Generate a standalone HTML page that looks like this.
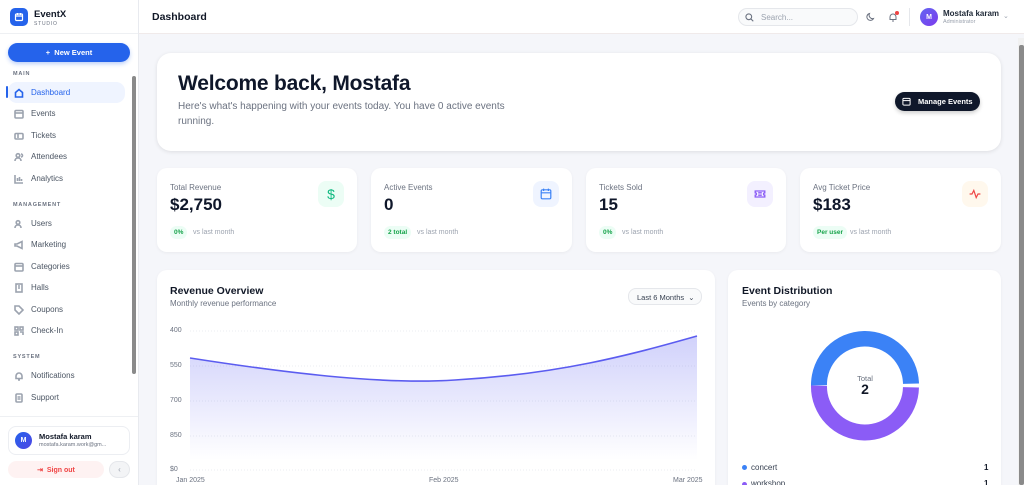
<!DOCTYPE html>
<html style="overflow:hidden;width:1024px;height:485px"><head><meta charset="utf-8"><style>
*{box-sizing:border-box;margin:0;padding:0}
body{width:1024px;height:485px;overflow:hidden;font-family:"Liberation Sans",sans-serif;background:#f5f6fa;position:relative;color:#111827}
.abs{position:absolute}
.sb{left:0;top:0;width:139px;height:485px;background:#fff;border-right:1px solid #e8eaef}
.nav{position:absolute;left:8px;width:117px;height:21px;display:flex;align-items:center;font-size:8px;color:#4b5563;padding-left:6px}
.nav svg{width:10px;height:10px;margin-right:7px;stroke:#9ca3af;fill:none;stroke-width:1.6}
.sec{position:absolute;left:13px;font-size:5.5px;letter-spacing:.8px;color:#6b7280;font-weight:bold}
.card{position:absolute;background:#fff;border-radius:10px;box-shadow:0 1px 3px rgba(0,0,0,.05)}
.lbl{font-size:8px;color:#6b7280;position:absolute;left:13px;top:15px}
.val{font-size:17px;font-weight:bold;position:absolute;left:13px;top:27px;color:#0f172a}
.pill{position:absolute;left:13px;top:58px;font-size:6.5px;font-weight:bold;color:#16a34a;background:#ecfdf5;border-radius:7px;padding:3px 4px}
.vs{position:absolute;top:61px;font-size:7px;color:#9ca3af}
.ic{position:absolute;right:13px;top:13px;width:26px;height:26px;border-radius:8px;display:flex;align-items:center;justify-content:center}
.yl{position:absolute;left:170px;font-size:7px;color:#6b7280}
</style></head><body>
<div class="abs sb">
 <div class="abs" style="left:10px;top:8px;width:18px;height:18px;border-radius:5px;background:#2563eb;display:flex;align-items:center;justify-content:center"><svg width="10" height="10" viewBox="0 0 10 10" fill="none" stroke="#fff" stroke-width="1.2"><rect x="1.5" y="2" width="7" height="6.5" rx="1"/><path d="M1.5 4h7M3.5 1v2M6.5 1v2"/></svg></div>
 <div class="abs" style="left:34px;top:9px;font-size:9.5px;font-weight:bold">EventX</div>
 <div class="abs" style="left:34px;top:21px;font-size:5px;letter-spacing:.8px;color:#6b7280">STUDIO</div>
 <div class="abs" style="left:0;top:33px;width:138px;border-top:1px solid #eef0f3"></div>
 <div class="abs" style="left:8px;top:43px;width:122px;height:19px;border-radius:10px;background:#2563eb;color:#fff;font-size:7.5px;font-weight:bold;display:flex;align-items:center;justify-content:center;box-shadow:0 2px 4px rgba(37,99,235,.3)">+&nbsp;&nbsp;New Event</div>
 <div class="sec" style="top:71px">MAIN</div>
 <div class="nav" style="top:82px;background:#eff4ff;border-radius:9px;color:#2563eb"><svg viewBox="0 0 10 10" style="stroke:#2563eb"><path d="M1.5 4.5L5 1.5l3.5 3V9h-7z"/></svg>Dashboard</div>
 <div class="abs" style="left:6px;top:86px;width:2px;height:12px;background:#2563eb;border-radius:1px"></div>
 <div class="nav" style="top:103px"><svg viewBox="0 0 10 10"><rect x="1" y="1.5" width="8" height="7.5" rx="1"/><path d="M1 4h8"/></svg>Events</div>
 <div class="nav" style="top:125px"><svg viewBox="0 0 10 10"><rect x="1" y="2.5" width="8" height="5.5" rx="1"/><path d="M4 3v4"/></svg>Tickets</div>
 <div class="nav" style="top:146px"><svg viewBox="0 0 10 10"><circle cx="4" cy="3.5" r="1.8"/><path d="M1 9c0-2 1.5-3 3-3s3 1 3 3M7 2a1.5 1.5 0 010 3"/></svg>Attendees</div>
 <div class="nav" style="top:168px"><svg viewBox="0 0 10 10"><path d="M1 1v8h8M3.5 7V4M5.5 7V3M7.5 7V5"/></svg>Analytics</div>
 <div class="sec" style="top:202px">MANAGEMENT</div>
 <div class="nav" style="top:213px"><svg viewBox="0 0 10 10"><circle cx="4" cy="3.5" r="1.8"/><path d="M1 9c0-2 1.5-3 3-3s3 1 3 3"/></svg>Users</div>
 <div class="nav" style="top:234px"><svg viewBox="0 0 10 10"><path d="M1 4h2l5-2.5v7L3 6H1z"/></svg>Marketing</div>
 <div class="nav" style="top:256px"><svg viewBox="0 0 10 10"><rect x="1" y="1.5" width="8" height="7.5" rx="1"/><path d="M1 4h8"/></svg>Categories</div>
 <div class="nav" style="top:277px"><svg viewBox="0 0 10 10"><rect x="2" y="1" width="6" height="8"/><path d="M4 3h2M4 5h2"/></svg>Halls</div>
 <div class="nav" style="top:299px"><svg viewBox="0 0 10 10"><path d="M1 1h4l4 4-4 4-4-4z"/></svg>Coupons</div>
 <div class="nav" style="top:320px"><svg viewBox="0 0 10 10"><rect x="1" y="1" width="3" height="3"/><rect x="6" y="1" width="3" height="3"/><rect x="1" y="6" width="3" height="3"/><path d="M6 6h3v3"/></svg>Check-In</div>
 <div class="sec" style="top:354px">SYSTEM</div>
 <div class="nav" style="top:365px"><svg viewBox="0 0 10 10"><path d="M2 7.5V5a3 3 0 016 0v2.5zM4 9h2"/></svg>Notifications</div>
 <div class="nav" style="top:387px"><svg viewBox="0 0 10 10"><rect x="2" y="1" width="6" height="8" rx="1"/><path d="M3.5 4h3M3.5 6h3"/></svg>Support</div>
 <div class="abs" style="left:132px;top:76px;width:4px;height:298px;background:#8a8a8a;border-radius:2px"></div>
 <div class="abs" style="left:0;top:416px;width:138px;height:69px;background:#fff;border-top:1px solid #eef0f3"></div>
 <div class="abs" style="left:8px;top:426px;width:122px;height:29px;border:1px solid #eceef2;border-radius:8px;background:#fff"></div>
 <div class="abs" style="left:15px;top:432px;width:17px;height:17px;border-radius:50%;background:linear-gradient(135deg,#2563eb,#4f46e5);color:#fff;font-size:7px;font-weight:bold;display:flex;align-items:center;justify-content:center">M</div>
 <div class="abs" style="left:39px;top:432px;font-size:7.5px;font-weight:bold">Mostafa karam</div>
 <div class="abs" style="left:39px;top:442px;font-size:5.5px;color:#6b7280">mostafa.karam.work@gm...</div>
 <div class="abs" style="left:8px;top:461px;width:96px;height:17px;border-radius:9px;background:#fef2f2;color:#ef4444;font-size:7px;font-weight:bold;display:flex;align-items:center;justify-content:center">⇥&nbsp; Sign out</div>
 <div class="abs" style="left:109px;top:461px;width:21px;height:17px;border-radius:9px;background:#f3f4f6;border:1px solid #e5e7eb;color:#9ca3af;font-size:8px;display:flex;align-items:center;justify-content:center">‹</div>
</div>
<div class="abs" style="left:139px;top:0;width:885px;height:34px;background:#fff;border-bottom:1px solid #f0eaea"></div>
<div class="abs" style="left:152px;top:11px;font-size:10.5px;font-weight:bold">Dashboard</div>
<div class="abs" style="left:738px;top:8px;width:120px;height:18px;border:1px solid #e5e7eb;border-radius:9px;background:#f9fafb;font-size:8px;color:#9ca3af;padding:4px 0 0 22px">Search...</div>
<svg class="abs" style="left:745px;top:13px" width="9" height="9" viewBox="0 0 10 10" fill="none" stroke="#6b7280" stroke-width="1.2"><circle cx="4.2" cy="4.2" r="3.2"/><path d="M6.6 6.6l2.6 2.6"/></svg>
<svg class="abs" style="left:866px;top:12px" width="10" height="10" viewBox="0 0 10 10" fill="none" stroke="#6b7280" stroke-width="1"><path d="M7.5 6.5A3.5 3.5 0 013.5 1.5a3.5 3.5 0 104 5z"/></svg>
<svg class="abs" style="left:888px;top:12px" width="10" height="10" viewBox="0 0 10 10" fill="none" stroke="#6b7280" stroke-width="1"><path d="M2 7.5V5a3 3 0 016 0v2.5zM4 9h2"/></svg>
<div class="abs" style="left:895px;top:11px;width:4px;height:4px;border-radius:50%;background:#ef4444"></div>
<div class="abs" style="left:909px;top:8px;width:1px;height:18px;background:#e5e7eb"></div>
<div class="abs" style="left:920px;top:8px;width:18px;height:18px;border-radius:50%;background:linear-gradient(135deg,#6366f1,#7c3aed);color:#fff;font-size:7px;font-weight:bold;display:flex;align-items:center;justify-content:center">M</div>
<div class="abs" style="left:943px;top:9px;font-size:8px;font-weight:bold;color:#1f2937">Mostafa karam</div>
<div class="abs" style="left:943px;top:19px;font-size:5.5px;color:#9ca3af">Administrator</div>
<div class="abs" style="left:1003px;top:12px;font-size:7px;color:#9ca3af">⌄</div>
<div class="abs" style="left:1018px;top:38px;width:6px;height:447px;background:#f1f1f1"></div>
<div class="abs" style="left:1019px;top:45px;width:5px;height:440px;background:#8a8a8a;border-radius:2px"></div>
<div class="card" style="left:157px;top:53px;width:844px;height:98px;border-radius:14px;box-shadow:0 1px 4px rgba(0,0,0,.1)"></div>
<div class="abs" style="left:178px;top:72px;font-size:21px;font-weight:bold;color:#0f172a;letter-spacing:-.2px">Welcome back, Mostafa</div>
<div class="abs" style="left:178px;top:99px;width:345px;font-size:10px;line-height:15px;color:#6b7280">Here's what's happening with your events today. You have 0 active events running.</div>
<div class="abs" style="left:895px;top:92px;width:85px;height:19px;border-radius:10px;background:#0f172a;color:#fff;font-size:7.5px;font-weight:bold;display:flex;align-items:center;padding-left:23px;box-shadow:0 2px 4px rgba(0,0,0,.2)">Manage Events</div>
<svg class="abs" style="left:902px;top:97px" width="9" height="9" viewBox="0 0 10 10" fill="none" stroke="#fff" stroke-width="1.1"><rect x="1" y="1.5" width="8" height="7.5" rx="1"/><path d="M1 4h8"/></svg>
<div class="card" style="left:157px;top:168px;width:200px;height:84px"><div class="lbl">Total Revenue</div><div class="val">$2,750</div><div class="pill">0%</div><div class="vs" style="left:36px">vs last month</div><div class="ic" style="background:#ecfdf5;color:#10b981;font-size:14px">$</div></div>
<div class="card" style="left:371px;top:168px;width:201px;height:84px"><div class="lbl">Active Events</div><div class="val">0</div><div class="pill">2 total</div><div class="vs" style="left:46px">vs last month</div><div class="ic" style="background:#eff4ff"><svg width="12" height="12" viewBox="0 0 10 10" fill="none" stroke="#3b82f6" stroke-width="1"><rect x="1" y="1.5" width="8" height="7.5" rx="1"/><path d="M1 4h8M3 .5v2M7 .5v2"/></svg></div></div>
<div class="card" style="left:586px;top:168px;width:200px;height:84px"><div class="lbl">Tickets Sold</div><div class="val">15</div><div class="pill">0%</div><div class="vs" style="left:36px">vs last month</div><div class="ic" style="background:#f3f0ff"><svg width="12" height="12" viewBox="0 0 10 10" fill="none" stroke="#8b5cf6" stroke-width="1.1"><path d="M1 2.5h8v1.5a1 1 0 000 2v1.5H1V6a1 1 0 000-2z"/><path d="M3.5 4h3M3.5 6h3"/></svg></div></div>
<div class="card" style="left:800px;top:168px;width:201px;height:84px"><div class="lbl">Avg Ticket Price</div><div class="val">$183</div><div class="pill">Per user</div><div class="vs" style="left:50px">vs last month</div><div class="ic" style="background:#fff8ed"><svg width="12" height="12" viewBox="0 0 10 10" fill="none" stroke="#ef4444" stroke-width="1"><path d="M.5 5h2l1.5-3 2 6 1.5-3h2"/></svg></div></div>
<div class="card" style="left:157px;top:270px;width:558px;height:215px;border-radius:10px 10px 0 0"></div>
<div class="card" style="left:728px;top:270px;width:273px;height:215px;border-radius:10px 10px 0 0"></div>
<div class="abs" style="left:170px;top:285px;font-size:10.5px;font-weight:bold">Revenue Overview</div>
<div class="abs" style="left:170px;top:299px;font-size:8px;color:#6b7280">Monthly revenue performance</div>
<div class="abs" style="left:628px;top:288px;width:74px;height:17px;border:1px solid #e5e7eb;border-radius:8px;background:#f9fafb;font-size:7.5px;color:#374151;padding:4px 0 0 8px">Last 6 Months&nbsp; ⌄</div>
<div class="yl" style="top:327px">400</div><div class="yl" style="top:362px">550</div><div class="yl" style="top:397px">700</div><div class="yl" style="top:432px">850</div><div class="yl" style="top:466px">$0</div>
<svg class="abs" style="left:0;top:0" width="1024" height="485">
<defs><linearGradient id="g" x1="0" y1="0" x2="0" y2="1"><stop offset="0" stop-color="#6366f1" stop-opacity=".3"/><stop offset="1" stop-color="#6366f1" stop-opacity="0"/></linearGradient></defs>
<g stroke="#e5e7eb" stroke-dasharray="1,2" stroke-width=".7"><path d="M190 331H697M190 366H697M190 401H697M190 436H697M190 470H697"/></g>
<path d="M190 358C280 372 380 385 455 380C560 374 630 355 697 336V460H190Z" fill="url(#g)"/>
<path d="M190 358C280 372 380 385 455 380C560 374 630 355 697 336" fill="none" stroke="#5b5cf0" stroke-width="1.6"/>
<path d="M865 331a54 54 0 0 1 54 53.5h-16a38 38 0 0 0-76 0h-16A54 54 0 0 1 865 331z" fill="#3b82f6" transform="rotate(-1 865 385)"/>
<path d="M919 386.5a54 54 0 0 1-108 0h16a38 38 0 0 0 76 0z" fill="#8b5cf6" transform="rotate(1 865 385)"/>
</svg>
<div class="abs" style="left:176px;top:477px;font-size:7px;color:#6b7280">Jan 2025</div>
<div class="abs" style="left:429px;top:477px;font-size:7px;color:#6b7280">Feb 2025</div>
<div class="abs" style="left:673px;top:477px;font-size:7px;color:#6b7280">Mar 2025</div>
<div class="abs" style="left:742px;top:285px;font-size:10.5px;font-weight:bold">Event Distribution</div>
<div class="abs" style="left:742px;top:299px;font-size:8px;color:#6b7280">Events by category</div>
<div class="abs" style="left:845px;top:374px;width:40px;text-align:center;font-size:7.5px;color:#6b7280">Total</div>
<div class="abs" style="left:845px;top:381px;width:40px;text-align:center;font-size:14px;font-weight:bold">2</div>
<div class="abs" style="left:742px;top:465px;width:5px;height:5px;border-radius:50%;background:#3b82f6"></div>
<div class="abs" style="left:751px;top:463px;font-size:8px;color:#374151">concert</div>
<div class="abs" style="left:984px;top:463px;font-size:8px;font-weight:bold">1</div>
<div class="abs" style="left:742px;top:482px;width:5px;height:5px;border-radius:50%;background:#8b5cf6"></div>
<div class="abs" style="left:751px;top:479px;font-size:8px;color:#374151">workshop</div>
<div class="abs" style="left:984px;top:479px;font-size:8px;font-weight:bold">1</div>
</body></html>
